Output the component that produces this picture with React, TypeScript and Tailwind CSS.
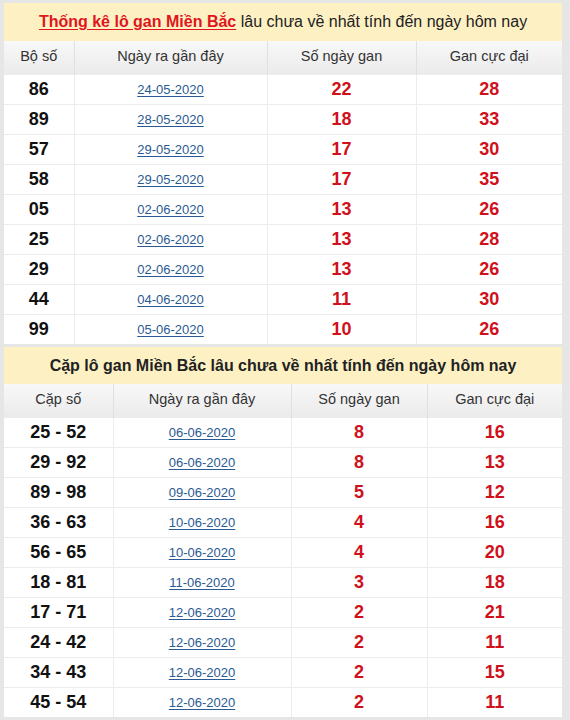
const gan = [
  { so: "86", ngay: "24-05-2020", gan: 22, max: 28 },
  { so: "89", ngay: "28-05-2020", gan: 18, max: 33 },
  { so: "57", ngay: "29-05-2020", gan: 17, max: 30 },
  { so: "58", ngay: "29-05-2020", gan: 17, max: 35 },
  { so: "05", ngay: "02-06-2020", gan: 13, max: 26 },
  { so: "25", ngay: "02-06-2020", gan: 13, max: 28 },
  { so: "29", ngay: "02-06-2020", gan: 13, max: 26 },
  { so: "44", ngay: "04-06-2020", gan: 11, max: 30 },
  { so: "99", ngay: "05-06-2020", gan: 10, max: 26 },
]

const cap = [
  { so: "25 - 52", ngay: "06-06-2020", gan: 8, max: 16 },
  { so: "29 - 92", ngay: "06-06-2020", gan: 8, max: 13 },
  { so: "89 - 98", ngay: "09-06-2020", gan: 5, max: 12 },
  { so: "36 - 63", ngay: "10-06-2020", gan: 4, max: 16 },
  { so: "56 - 65", ngay: "10-06-2020", gan: 4, max: 20 },
  { so: "18 - 81", ngay: "11-06-2020", gan: 3, max: 18 },
  { so: "17 - 71", ngay: "12-06-2020", gan: 2, max: 21 },
  { so: "24 - 42", ngay: "12-06-2020", gan: 2, max: 11 },
  { so: "34 - 43", ngay: "12-06-2020", gan: 2, max: 15 },
  { so: "45 - 54", ngay: "12-06-2020", gan: 2, max: 11 },
]

type Row = { so: string; ngay: string; gan: number; max: number }

function Table({
  title,
  first,
  widths,
  rows,
  headH,
}: {
  title: React.ReactNode
  first: string
  widths: string[]
  rows: Row[]
  headH: string
}) {
  return (
    <table className="w-full table-fixed border-collapse bg-white">
      <colgroup>
        {widths.map((w, i) => (
          <col key={i} style={{ width: w }} />
        ))}
      </colgroup>
      <thead>
        <tr>
          <th colSpan={4} className={`${headH} bg-[#fdf1c4] text-center text-[16px] font-normal text-[#222]`}>
            {title}
          </th>
        </tr>
        <tr className="h-[33px] bg-gradient-to-b from-[#f8f8f8] to-[#ebebeb] text-[14.5px] font-normal text-[#333]">
          <th className="border-r border-[#e0e0e0] font-normal">{first}</th>
          <th className="border-r border-[#e0e0e0] font-normal">Ngày ra gần đây</th>
          <th className="border-r border-[#e0e0e0] font-normal">Số ngày gan</th>
          <th className="font-normal">Gan cực đại</th>
        </tr>
      </thead>
      <tbody>
        {rows.map((r) => (
          <tr key={r.so} className="h-[30px] border-t border-[#ececec]">
            <td className="border-r border-[#ececec] text-center text-[18px] font-bold text-[#111]">{r.so}</td>
            <td className="border-r border-[#ececec] text-center">
              <a href="#" className="text-[13px] text-[#2b5a92] underline underline-offset-2">
                {r.ngay}
              </a>
            </td>
            <td className="border-r border-[#ececec] text-center text-[18px] font-bold text-[#d0101a]">{r.gan}</td>
            <td className="text-center text-[18px] font-bold text-[#d0101a]">{r.max}</td>
          </tr>
        ))}
      </tbody>
    </table>
  )
}

export default function App() {
  return (
    <div className="h-[720px] w-[570px] overflow-hidden bg-[#e6e6e6] pl-[4px] pr-[8px] pt-[3px] font-['Liberation_Sans',Arial,sans-serif]">
      <Table
        headH="h-[38px]"
        title={
          <>
            <a href="#" className="font-bold text-[#e0161e] underline underline-offset-2">
              Thống kê lô gan Miền Bắc
            </a>{" "}
            lâu chưa về nhất tính đến ngày hôm nay
          </>
        }
        first="Bộ số"
        widths={["70px", "193px", "149px", "146px"]}
        rows={gan}
      />
      <div className="h-[3px]" />
      <Table
        headH="h-[37px]"
        title={<span className="font-bold text-[#222]">Cặp lô gan Miền Bắc lâu chưa về nhất tính đến ngày hôm nay</span>}
        first="Cặp số"
        widths={["109px", "178px", "136px", "135px"]}
        rows={cap}
      />
    </div>
  )
}
